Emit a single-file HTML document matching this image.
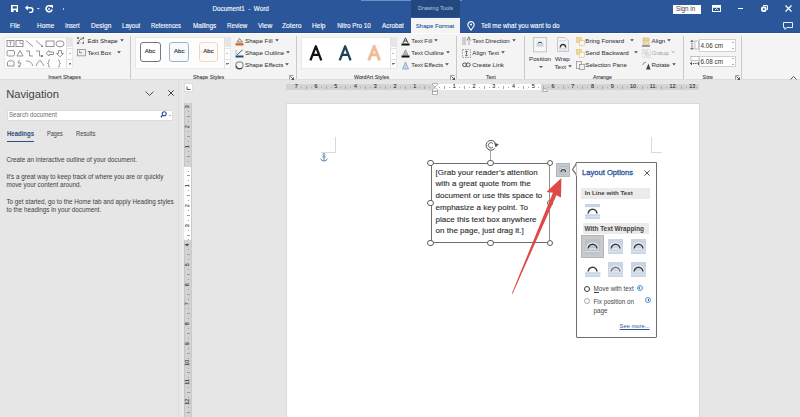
<!DOCTYPE html>
<html><head><meta charset="utf-8">
<style>
*{margin:0;padding:0;box-sizing:border-box}
html,body{width:800px;height:417px;overflow:hidden;background:#e6e6e6;font-family:"Liberation Sans",sans-serif}
.a{position:absolute}
.t{position:absolute;white-space:pre;line-height:1}
#title{left:0;top:0;width:800px;height:33px;background:#2b579a}
.tab{position:absolute;top:23px;font-size:6.3px;color:#fff;-webkit-text-stroke:0.1px #fff;white-space:pre;line-height:1}
#ribbon{left:0;top:33px;width:800px;height:47.4px;background:#f4f4f4;border-bottom:1px solid #dcdcdc}
.rt{position:absolute;font-size:6.2px;color:#383838;-webkit-text-stroke:0.04px #383838;white-space:pre;line-height:1;margin-top:0.7px}
.gl{position:absolute;font-size:5.3px;color:#3c3c3c;-webkit-text-stroke:0.1px #3c3c3c;white-space:pre;line-height:1;top:74.9px}
.sep{position:absolute;top:36px;width:1px;height:43px;background:#c9c9c9}
.arr{display:inline-block;width:0;height:0;border-left:1.8px solid transparent;border-right:1.8px solid transparent;border-top:2.3px solid #4a4a4a;vertical-align:0.5px;margin-left:2px;-webkit-text-stroke:0}
.nt{position:absolute;left:6.4px;font-size:6.3px;color:#404040;margin-top:0.8px;white-space:pre;line-height:1}
.rn{position:absolute;font-size:5.4px;color:#303030;-webkit-text-stroke:0.1px #303030;text-align:center;line-height:1;white-space:pre}
.tb{position:absolute;left:435.6px;font-size:8px;color:#2e2e2e;-webkit-text-stroke:0.12px #2e2e2e;margin-top:2.2px;white-space:pre;line-height:1}
.hd{position:absolute;width:6.4px;height:6.4px;margin:-3.2px 0 0 -3.2px;border-radius:50%;border:1.1px solid #5e5e5e;background:#fff}
.ar{display:inline-block;margin-left:2px;vertical-align:1px}
</style></head><body>

<!-- TITLE BAR -->
<div id="title" class="a"></div>
<div class="a" style="left:361px;top:0;width:101px;height:1px;background:#6d8fc4"></div>
<div class="a" style="left:410.5px;top:0;width:49.5px;height:17px;background:#22487f"></div>
<div class="t" style="left:418px;top:5.6px;font-size:5.6px;color:#b9c9e2">Drawing Tools</div>
<div class="t" style="left:212.5px;top:6px;font-size:6.3px;color:#fff;-webkit-text-stroke:0.1px #fff">Document1  -  Word</div>
<!-- qat -->
<svg class="a" style="left:10.8px;top:4.8px" width="7.4" height="7.6" viewBox="0 0 7.4 7.6"><rect width="7.4" height="7.6" fill="#fff"/><rect x="1.6" y="1.2" width="4.2" height="2.4" fill="#2b579a"/><rect x="2.6" y="5.2" width="2.4" height="2.4" fill="#2b579a"/></svg>
<svg class="a" style="left:24.8px;top:4.6px" width="16" height="8" viewBox="0 0 16 8"><path d="M2 2.8 H5.6 A2.3 2.3 0 0 1 5.6 7.4 H4.2" fill="none" stroke="#fff" stroke-width="1.4"/><path d="M0 2.8 L2.8 0.2 L2.8 5.4 Z" fill="#fff"/><path d="M11.8 3 L14.8 3 L13.3 4.6Z" fill="#dfe6f1"/></svg>
<svg class="a" style="left:45.2px;top:4.8px" width="8" height="8" viewBox="0 0 8 8"><path d="M6.2 1.6 A3 3 0 1 0 7 4.5" fill="none" stroke="#fff" stroke-width="1.6"/><path d="M4.2 0 L8 0 L8 3.6Z" fill="#fff"/><circle cx="4" cy="4" r="0.9" fill="#fff"/></svg>
<div class="a" style="left:62.6px;top:8.4px;width:1.6px;height:1.8px;background:#b9c8e0"></div>
<!-- right controls -->
<div class="a" style="left:672.5px;top:4.5px;width:28.5px;height:9.5px;background:#fff"></div>
<div class="t" style="left:676px;top:6px;font-size:6.3px;color:#444">Sign in</div>
<svg class="a" style="left:712px;top:5px" width="9" height="7" viewBox="0 0 9 7"><rect x="0.5" y="0.5" width="8" height="6" fill="none" stroke="#fff"/><rect x="0.5" y="0.5" width="8" height="2.3" fill="#fff"/><path d="M3 5 L4.5 3.5 L6 5" fill="none" stroke="#fff" stroke-width="0.8"/></svg>
<div class="a" style="left:738px;top:7.5px;width:5px;height:1px;background:#fff"></div>
<svg class="a" style="left:760.5px;top:4.5px" width="7" height="7" viewBox="0 0 7 7"><path d="M2 0.6 H6.4 V5" fill="none" stroke="#fff" stroke-width="1"/><rect x="0.6" y="2" width="4.4" height="4.4" rx="1" fill="#fff" stroke="#fff" stroke-width="1"/><rect x="1.9" y="3.3" width="1.8" height="1.8" fill="#2b579a"/></svg>
<svg class="a" style="left:784.5px;top:5px" width="7" height="7" viewBox="0 0 7 7"><path d="M0.5 0.5 L6.5 6.5 M6.5 0.5 L0.5 6.5" stroke="#fff" stroke-width="1.2"/></svg>
<svg class="a" style="left:783px;top:21.5px" width="10" height="8" viewBox="0 0 10 8"><path d="M0.5 0.5 H9.5 V5.5 H4 L1.8 7.5 V5.5 H0.5 Z" fill="none" stroke="#fff" stroke-width="0.9"/></svg>

<!-- TABS -->
<div class="tab" style="left:10.2px;transform:scaleX(0.986);transform-origin:0 0">File</div>
<div class="tab" style="left:36.7px;transform:scaleX(1.030);transform-origin:0 0">Home</div>
<div class="tab" style="left:64.8px;transform:scaleX(0.933);transform-origin:0 0">Insert</div>
<div class="tab" style="left:90.7px;transform:scaleX(1.035);transform-origin:0 0">Design</div>
<div class="tab" style="left:121.7px;transform:scaleX(0.967);transform-origin:0 0">Layout</div>
<div class="tab" style="left:151.2px;transform:scaleX(0.932);transform-origin:0 0">References</div>
<div class="tab" style="left:192.5px;transform:scaleX(1.005);transform-origin:0 0">Mailings</div>
<div class="tab" style="left:226.7px;transform:scaleX(0.983);transform-origin:0 0">Review</div>
<div class="tab" style="left:257.5px;transform:scaleX(1.049);transform-origin:0 0">View</div>
<div class="tab" style="left:282.2px;transform:scaleX(1.071);transform-origin:0 0">Zotero</div>
<div class="tab" style="left:312.2px;transform:scaleX(1.041);transform-origin:0 0">Help</div>
<div class="tab" style="left:337.2px;transform:scaleX(1.000);transform-origin:0 0">Nitro Pro 10</div>
<div class="tab" style="left:381.7px;transform:scaleX(1.005);transform-origin:0 0">Acrobat</div>
<div class="a" style="left:410.8px;top:18px;width:49.2px;height:16px;background:#f4f4f4"></div>
<div class="tab" style="left:415.7px;font-size:6.1px;color:#2b579a;-webkit-text-stroke:0.1px #2b579a">Shape Format</div>
<svg class="a" style="left:467.4px;top:21px" width="8" height="10" viewBox="0 0 8 10"><path d="M4 9.2 L1.3 5.2 A3.1 3.1 0 1 1 6.7 5.2 Z" fill="none" stroke="#fff" stroke-width="1.1" stroke-linejoin="round"/><circle cx="4" cy="3.6" r="1" fill="#fff"/></svg>
<div class="tab" style="left:481px;transform:scaleX(1.012);transform-origin:0 0">Tell me what you want to do</div>

<!-- RIBBON -->
<div id="ribbon" class="a"></div>
<div class="a" style="left:0;top:33px;width:800px;height:1.2px;background:#fdfdfd"></div>
<div class="a" style="left:0;top:32.2px;width:410.8px;height:0.8px;background:#24508f"></div><div class="a" style="left:460px;top:32.2px;width:340px;height:0.8px;background:#24508f"></div>

<!-- shapes gallery -->
<div class="a" style="left:4.3px;top:37.2px;width:69px;height:31.6px;background:#fdfdfd;border:1px solid #e9e9e9"></div>
<div class="a" style="left:66.2px;top:37.2px;width:7.2px;height:31.6px;border-left:1px solid #e2e2e2"></div>
<div class="a" style="left:66.7px;top:37.7px;width:6.2px;height:9.8px;background:#e6e6e6"></div>
<div class="a" style="left:67px;top:47.5px;width:6px;height:0;border-top:1px solid #e2e2e2"></div>
<div class="a" style="left:67px;top:58.5px;width:6px;height:0;border-top:1px solid #e2e2e2"></div>
<div class="a" style="left:68.8px;top:52.5px;width:0;height:0;border-left:1.2px solid transparent;border-right:1.2px solid transparent;border-top:1.2px solid #777"></div>
<div class="a" style="left:68.8px;top:62.6px;width:2.4px;height:0.8px;background:#777"></div>
<div class="a" style="left:68.8px;top:63.8px;width:0;height:0;border-left:1.2px solid transparent;border-right:1.2px solid transparent;border-top:1.2px solid #777"></div>
<svg class="a" style="left:5px;top:38.6px" width="61" height="31" viewBox="0 0 61 31" fill="none" stroke="#8a8a8a" stroke-width="0.9">
 <rect x="2" y="1.5" width="7" height="6"/><path d="M4 3 h3 M5.5 3 v3.5" stroke-width="0.7"/>
 <rect x="11" y="1.5" width="7" height="6"/><path d="M15 1.5 v3 h3" stroke-width="0.7"/>
 <path d="M21 1.5 L28 7.5"/>
 <path d="M31 1.5 L37.5 7.5"/><path d="M38 8 l-2 -0.3 l1.5 -1.5z" fill="#555" stroke="none"/>
 <rect x="41" y="2" width="8" height="5.5"/>
 <ellipse cx="55" cy="4.8" rx="4" ry="3"/>
 <rect x="2" y="11.5" width="7.5" height="5.5" rx="1.5"/>
 <path d="M12 17 L15 11.5 L18 17 Z"/>
 <path d="M21 12 h3.5 v5 h3.5"/>
 <path d="M31 12 h3.5 v5 h3"/><path d="M38.5 17 l-2 -1.2 v2.4z" fill="#555" stroke="none"/>
 <path d="M41 14.2 L44 11.5 V13 H48.5 V15.5 H44 V17 Z"/>
 <path d="M53.5 11.5 H56.5 V14.5 H58.5 L55 17.8 L51.5 14.5 H53.5 Z"/>
 <path d="M2.5 27 V23 Q4 21 6 22 Q8 21 9 23 V27 Z"/>
 <path d="M14.5 21 L13 24 L16 24 L14 28 M14 28 l-1 -1.5 M14 28 l1.5 -1"/>
 <path d="M21 22 Q26 21.5 28 27"/>
 <path d="M31 27 Q34 20 36 22 Q37 24 39 27"/>
 <path d="M45 21 Q43.5 21 43.5 22.5 V23.5 Q43.5 24.5 42.5 24.5 Q43.5 24.5 43.5 25.5 V26.5 Q43.5 28 45 28"/>
 <path d="M53 21 Q54.5 21 54.5 22.5 V23.5 Q54.5 24.5 55.5 24.5 Q54.5 24.5 54.5 25.5 V26.5 Q54.5 28 53 28"/>
</svg>
<svg class="a" style="left:76.6px;top:37px" width="7.5" height="7" viewBox="0 0 7.5 7"><rect x="1" y="1" width="5.5" height="5" fill="none" stroke="#8a8a8a" stroke-width="0.6" stroke-dasharray="1 0.8"/><path d="M1.5 5.5 Q2 2 6 1.5" fill="none" stroke="#555" stroke-width="0.7"/><rect x="0" y="0" width="1.8" height="1.8" fill="#666"/><rect x="5.7" y="0" width="1.8" height="1.8" fill="#666"/><rect x="0" y="5.2" width="1.8" height="1.8" fill="#666"/><rect x="5.7" y="5.2" width="1.8" height="1.8" fill="#666"/></svg>
<div class="rt" style="left:87.5px;top:37.6px">Edit Shape<svg class="ar" width="4" height="3" viewBox="0 0 4 3"><path d="M0.2 0.3H3.8L2 2.5Z" fill="#4a4a4a"/></svg></div>
<svg class="a" style="left:76.5px;top:49.3px" width="9" height="7.3" viewBox="0 0 9 7.3"><rect x="0.5" y="0.5" width="8" height="6.3" fill="#f0f0f0" stroke="#9a9a9a" stroke-width="0.9"/><path d="M2.6 1.5 v2.3 h2.4" fill="none" stroke="#555" stroke-width="0.6"/></svg>
<div class="rt" style="left:87.5px;top:49.8px">Text Box  <svg class="ar" width="4" height="3" viewBox="0 0 4 3"><path d="M0.2 0.3H3.8L2 2.5Z" fill="#4a4a4a"/></svg></div>
<div class="gl" style="left:48.2px">Insert Shapes</div>
<div class="sep" style="left:130px"></div>

<!-- shape styles -->
<div class="a" style="left:135px;top:37.2px;width:96px;height:31.6px;background:#fdfdfd;border:1px solid #e9e9e9"></div>
<div class="a" style="left:224px;top:37.2px;width:7px;height:31.6px;border-left:1px solid #e2e2e2"></div>
<div class="a" style="left:224.5px;top:37.7px;width:6px;height:9.8px;background:#e6e6e6"></div>
<div class="a" style="left:225px;top:47.5px;width:6px;border-top:1px solid #e2e2e2"></div>
<div class="a" style="left:225px;top:58.5px;width:6px;border-top:1px solid #e2e2e2"></div>
<div class="a" style="left:226.3px;top:52.5px;width:0;height:0;border-left:1.2px solid transparent;border-right:1.2px solid transparent;border-top:1.2px solid #777"></div>
<div class="a" style="left:226.3px;top:62.6px;width:2.4px;height:0.8px;background:#777"></div>
<div class="a" style="left:226.3px;top:63.8px;width:0;height:0;border-left:1.2px solid transparent;border-right:1.2px solid transparent;border-top:1.2px solid #777"></div>
<div class="a" style="left:140px;top:42px;width:20.6px;height:19.6px;border:1.7px solid #787878;border-radius:3px;background:#fff"></div>
<div class="t" style="left:144.8px;top:48.3px;font-size:6.1px;color:#333;-webkit-text-stroke:0.15px #333">Abc</div>
<div class="a" style="left:169.4px;top:42px;width:20.1px;height:19.6px;border:1.7px solid #a3b3c3;border-radius:3px;background:#f8fbfd"></div>
<div class="t" style="left:174px;top:48.3px;font-size:6.1px;color:#333;-webkit-text-stroke:0.15px #333">Abc</div>
<div class="a" style="left:198.8px;top:42px;width:19.5px;height:19.6px;border:1.7px solid #f0d6c4;border-radius:3px;background:#fffaf7"></div>
<div class="t" style="left:203.2px;top:48.3px;font-size:6.1px;color:#333;-webkit-text-stroke:0.15px #333">Abc</div>
<svg class="a" style="left:234.5px;top:36.5px" width="9" height="9" viewBox="0 0 9 9"><path d="M2 5 L4.5 1.5 L7.5 5 Z" fill="none" stroke="#666" stroke-width="0.8"/><rect x="0.5" y="6.2" width="8" height="2.3" fill="#d9622b"/></svg>
<div class="rt" style="left:245px;top:37.6px">Shape Fill<svg class="ar" width="4" height="3" viewBox="0 0 4 3"><path d="M0.2 0.3H3.8L2 2.5Z" fill="#4a4a4a"/></svg></div>
<svg class="a" style="left:234.5px;top:48.5px" width="9" height="9" viewBox="0 0 9 9"><path d="M2 6 L7.5 0.8" stroke="#555" stroke-width="1"/><path d="M1 1 V6" stroke="#888" stroke-width="0.6"/><rect x="0.5" y="6.5" width="8" height="2" fill="#1f4e79"/></svg>
<div class="rt" style="left:245px;top:49.8px">Shape Outline<svg class="ar" width="4" height="3" viewBox="0 0 4 3"><path d="M0.2 0.3H3.8L2 2.5Z" fill="#4a4a4a"/></svg></div>
<svg class="a" style="left:234.5px;top:60.5px" width="9" height="9" viewBox="0 0 9 9"><rect x="1" y="1" width="7" height="6.5" rx="2.2" fill="#f4f4f4" stroke="#666" stroke-width="0.9"/><path d="M1.2 5 Q1.5 7.8 4.5 7.8 L7 7.3" fill="none" stroke="#444" stroke-width="1.3"/></svg>
<div class="rt" style="left:245px;top:61.8px">Shape Effects<svg class="ar" width="4" height="3" viewBox="0 0 4 3"><path d="M0.2 0.3H3.8L2 2.5Z" fill="#4a4a4a"/></svg></div>
<div class="gl" style="left:193px">Shape Styles</div>
<svg class="a" style="left:289px;top:75px" width="5" height="5" viewBox="0 0 5 5"><path d="M0.5 4.5 V0.5 H4.5" fill="none" stroke="#777" stroke-width="0.7"/><path d="M1.5 1.5 L4.5 4.5 M4.5 2.5 V4.5 H2.5" fill="none" stroke="#333" stroke-width="0.8"/></svg>
<div class="sep" style="left:295.5px"></div>

<!-- wordart -->
<div class="a" style="left:300.5px;top:37.2px;width:96.5px;height:31.6px;background:#fff;border:1px solid #e9e9e9"></div>
<div class="a" style="left:390px;top:37.2px;width:7px;height:31.6px;border-left:1px solid #e2e2e2"></div>
<div class="a" style="left:390.5px;top:37.7px;width:6px;height:9.8px;background:#e6e6e6"></div>
<div class="a" style="left:391px;top:47.5px;width:6px;border-top:1px solid #e2e2e2"></div>
<div class="a" style="left:391px;top:58.5px;width:6px;border-top:1px solid #e2e2e2"></div>
<div class="a" style="left:392.3px;top:52.5px;width:0;height:0;border-left:1.2px solid transparent;border-right:1.2px solid transparent;border-top:1.2px solid #777"></div>
<div class="a" style="left:392.3px;top:62.6px;width:2.4px;height:0.8px;background:#777"></div>
<div class="a" style="left:392.3px;top:63.8px;width:0;height:0;border-left:1.2px solid transparent;border-right:1.2px solid transparent;border-top:1.2px solid #777"></div>
<svg class="a" style="left:305px;top:43px" width="90" height="20" viewBox="0 0 90 20">
 <path d="M5.40 17.4 L10.85 3.3 L16.30 17.4 M8.00 11.8 H13.70" fill="none" stroke="#111" stroke-width="2.3" stroke-linejoin="round"/>
 <path d="M34.70 17.4 L40.15 3.3 L45.60 17.4 M37.30 11.8 H43.00" fill="none" stroke="#1e4258" stroke-width="2.3" stroke-linejoin="round"/>
 <path d="M63.70 17.4 L69.15 3.3 L74.60 17.4 M66.30 11.8 H72.00" fill="none" stroke="#f7d9c6" stroke-width="3.6" stroke-linejoin="round"/>
 <path d="M63.70 17.4 L69.15 3.3 L74.60 17.4 M66.30 11.8 H72.00" fill="none" stroke="#eebb9c" stroke-width="2.2" stroke-linejoin="round"/>
</svg>
<div class="gl" style="left:354px">WordArt Styles</div>

<svg class="a" style="left:400.5px;top:36.5px" width="9" height="9" viewBox="0 0 9 9"><path d="M2 6 L4.5 0.8 L7 6 M3 4 H6" fill="none" stroke="#333" stroke-width="0.9"/><rect x="0.5" y="6.5" width="8" height="2" fill="#111"/></svg>
<div class="rt" style="left:411.3px;top:37.6px">Text Fill<svg class="ar" width="4" height="3" viewBox="0 0 4 3"><path d="M0.2 0.3H3.8L2 2.5Z" fill="#4a4a4a"/></svg></div>
<svg class="a" style="left:400.5px;top:48.5px" width="9" height="9" viewBox="0 0 9 9"><path d="M2 6 L4.5 0.8 L7 6 Z" fill="#bbb" stroke="#888" stroke-width="0.7"/><rect x="0.5" y="6.5" width="8" height="2" fill="#111"/></svg>
<div class="rt" style="left:411.3px;top:49.8px">Text Outline<svg class="ar" width="4" height="3" viewBox="0 0 4 3"><path d="M0.2 0.3H3.8L2 2.5Z" fill="#4a4a4a"/></svg></div>
<svg class="a" style="left:400.5px;top:60.5px" width="9" height="9" viewBox="0 0 9 9"><path d="M1.5 8 L4.5 1 L7.5 8 Z" fill="#c5d3e3" stroke="#8aa2bd" stroke-width="0.8"/></svg>
<div class="rt" style="left:411.3px;top:61.8px">Text Effects<svg class="ar" width="4" height="3" viewBox="0 0 4 3"><path d="M0.2 0.3H3.8L2 2.5Z" fill="#4a4a4a"/></svg></div>
<svg class="a" style="left:450px;top:75px" width="5" height="5" viewBox="0 0 5 5"><path d="M0.5 4.5 V0.5 H4.5" fill="none" stroke="#777" stroke-width="0.7"/><path d="M1.5 1.5 L4.5 4.5 M4.5 2.5 V4.5 H2.5" fill="none" stroke="#333" stroke-width="0.8"/></svg>
<div class="sep" style="left:455.5px"></div>

<!-- text group -->
<svg class="a" style="left:461.5px;top:36px" width="9" height="10" viewBox="0 0 9 10" fill="none" stroke="#888" stroke-width="0.7"><path d="M1 1 V9 M3 1 V9 M7 3 V9"/><path d="M5 4.5 L6.8 0.8 L8.6 4.5" stroke="#555"/></svg>
<div class="rt" style="left:472.3px;top:37.6px">Text Direction<svg class="ar" width="4" height="3" viewBox="0 0 4 3"><path d="M0.2 0.3H3.8L2 2.5Z" fill="#4a4a4a"/></svg></div>
<svg class="a" style="left:461.5px;top:48.5px" width="9" height="9" viewBox="0 0 9 9" fill="none" stroke="#777" stroke-width="0.7"><rect x="0.5" y="0.5" width="8" height="8" stroke-dasharray="1.5 1"/><path d="M4.5 2 V7 M3.2 3.2 L4.5 1.8 L5.8 3.2 M3.2 5.8 L4.5 7.2 L5.8 5.8" stroke="#444"/></svg>
<div class="rt" style="left:472.3px;top:49.8px">Align Text<svg class="ar" width="4" height="3" viewBox="0 0 4 3"><path d="M0.2 0.3H3.8L2 2.5Z" fill="#4a4a4a"/></svg></div>
<svg class="a" style="left:461.5px;top:62px" width="9" height="6" viewBox="0 0 9 6" fill="none" stroke="#555" stroke-width="1"><rect x="0.6" y="1" width="4.2" height="3.6" rx="1.8"/><rect x="4" y="1" width="4.2" height="3.6" rx="1.8"/></svg>
<div class="rt" style="left:472.3px;top:61.8px">Create Link</div>
<div class="gl" style="left:486px">Text</div>
<div class="sep" style="left:524px"></div>

<!-- arrange -->
<svg class="a" style="left:533px;top:37.4px" width="14" height="15.4" viewBox="0 0 14 15.4"><rect x="0.6" y="0.6" width="12.8" height="14.2" fill="#f7f7f7" stroke="#c4c4c4" stroke-width="1"/><rect x="3" y="3" width="8" height="7.5" fill="#eef1f4"/><path d="M4.8 6.2 Q7 4.2 9.2 6.2" fill="none" stroke="#3a3a3a" stroke-width="1"/><rect x="3.5" y="7" width="7" height="2.5" fill="#c9d6e3"/></svg>
<div class="rt" style="left:529px;top:55.5px">Position</div>
<div class="a" style="left:538.5px;top:66px;width:0;height:0;border-left:2px solid transparent;border-right:2px solid transparent;border-top:2px solid #555"></div>
<svg class="a" style="left:556.9px;top:37px" width="12" height="15.2" viewBox="0 0 12 15.2"><path d="M0.6 0.6 H8.2 L11.4 3.8 V14.6 H0.6 Z" fill="#f4f6f8" stroke="#c4c4c4" stroke-width="1"/><rect x="2" y="3.2" width="7.5" height="1" fill="#cdd8e3"/><rect x="2" y="10.8" width="8" height="1" fill="#cdd8e3"/><rect x="2" y="12.6" width="8" height="1" fill="#cdd8e3"/><path d="M3.3 10.4 A2.7 2.9 0 0 1 8.7 10.4" fill="none" stroke="#333" stroke-width="1.3"/></svg>
<div class="rt" style="left:555px;top:55.5px">Wrap</div>
<div class="rt" style="left:554.5px;top:63.5px">Text<svg class="ar" width="4" height="3" viewBox="0 0 4 3"><path d="M0.2 0.3H3.8L2 2.5Z" fill="#4a4a4a"/></svg></div>
<svg class="a" style="left:575.5px;top:36.5px" width="9" height="9" viewBox="0 0 9 9"><rect x="0.5" y="0.5" width="5" height="5" fill="#efd991" stroke="#d9bd6a" stroke-width="0.5"/><rect x="3.5" y="3.5" width="5" height="5" fill="#fbf6e8" stroke="#cfc4a8" stroke-width="0.6"/></svg>
<div class="rt" style="left:585.3px;top:37.6px">Bring Forward  <svg class="ar" width="4" height="3" viewBox="0 0 4 3"><path d="M0.2 0.3H3.8L2 2.5Z" fill="#4a4a4a"/></svg></div>
<svg class="a" style="left:575.5px;top:48.5px" width="9" height="9" viewBox="0 0 9 9"><rect x="0.5" y="0.5" width="5" height="5" fill="#efd991" stroke="#d9bd6a" stroke-width="0.5"/><rect x="3.5" y="3.5" width="5" height="5" fill="#fbf6e8" stroke="#cfc4a8" stroke-width="0.6"/></svg>
<div class="rt" style="left:585.3px;top:49.8px">Send Backward  <svg class="ar" width="4" height="3" viewBox="0 0 4 3"><path d="M0.2 0.3H3.8L2 2.5Z" fill="#4a4a4a"/></svg></div>
<svg class="a" style="left:575.5px;top:60.5px" width="9" height="9" viewBox="0 0 9 9" fill="none" stroke="#888" stroke-width="0.7"><rect x="0.5" y="0.5" width="5" height="7"/><rect x="3.5" y="3.5" width="5" height="5" fill="#f0f0f0"/></svg>
<div class="rt" style="left:585.3px;top:61.8px">Selection Pane</div>
<svg class="a" style="left:641.5px;top:36.5px" width="8" height="10" viewBox="0 0 8 10"><rect x="1" y="1" width="6" height="3" fill="#e6d3a0" stroke="#c9ae5a" stroke-width="0.5"/><rect x="1" y="5" width="6" height="2.5" fill="#f0e4c4" stroke="#c9ae5a" stroke-width="0.5"/><path d="M0 9 H8" stroke="#333" stroke-width="0.9"/></svg>
<div class="rt" style="left:651.5px;top:37.6px">Align<svg class="ar" width="4" height="3" viewBox="0 0 4 3"><path d="M0.2 0.3H3.8L2 2.5Z" fill="#4a4a4a"/></svg></div>
<svg class="a" style="left:641.5px;top:48.5px" width="9" height="9" viewBox="0 0 9 9" fill="none" stroke="#c8c8c8" stroke-width="0.7"><rect x="0.5" y="0.5" width="8" height="8" stroke-dasharray="1.2 1"/><rect x="2" y="2" width="3" height="3"/><rect x="4" y="4" width="3" height="3"/></svg>
<div class="rt" style="left:651.5px;top:49.8px;color:#b8b8b8">Group<svg class="ar" width="4" height="3" viewBox="0 0 4 3"><path d="M0.2 0.3H3.8L2 2.5Z" fill="#c4c4c4"/></svg></div>
<svg class="a" style="left:641.5px;top:60.5px" width="9" height="9" viewBox="0 0 9 9"><path d="M4 8.5 L6.5 2.5 L8.5 8.5 Z" fill="#444"/><path d="M0.8 4 Q1.5 1 4 1.2" fill="none" stroke="#666" stroke-width="0.7"/></svg>
<div class="rt" style="left:651.5px;top:61.8px">Rotate<svg class="ar" width="4" height="3" viewBox="0 0 4 3"><path d="M0.2 0.3H3.8L2 2.5Z" fill="#4a4a4a"/></svg></div>
<div class="gl" style="left:593px">Arrange</div>
<div class="sep" style="left:683.2px"></div>

<!-- size -->
<svg class="a" style="left:689.5px;top:39.5px" width="9" height="10" viewBox="0 0 9 10"><path d="M2 0.5 V9.5" stroke="#333" stroke-width="0.8" stroke-dasharray="1.5 0.8"/><path d="M0.5 2 L2 0.5 L3.5 2 M0.5 8 L2 9.5 L3.5 8" fill="none" stroke="#333" stroke-width="0.8"/><rect x="5" y="1" width="3.5" height="8" fill="#fff" stroke="#999" stroke-width="0.6"/></svg>
<div class="a" style="left:699px;top:39.4px;width:37px;height:12.2px;background:#fff;border:1px solid #cfcfcf"></div>
<div class="rt" style="left:700.5px;top:42.3px;font-size:6.3px">4.06 cm</div>
<div class="a" style="left:731.5px;top:41.5px;border-left:1.3px solid transparent;border-right:1.3px solid transparent;border-bottom:1.3px solid #666"></div>
<div class="a" style="left:731.5px;top:47.5px;border-left:1.3px solid transparent;border-right:1.3px solid transparent;border-top:1.3px solid #666"></div>
<svg class="a" style="left:689.5px;top:56px" width="10" height="10" viewBox="0 0 10 10"><rect x="1" y="0.5" width="8" height="4" fill="#fff" stroke="#999" stroke-width="0.6"/><path d="M0.5 7.5 H9.5" stroke="#333" stroke-width="0.8" stroke-dasharray="1.5 0.8"/><path d="M2 6 L0.5 7.5 L2 9 M8 6 L9.5 7.5 L8 9" fill="none" stroke="#333" stroke-width="0.8"/></svg>
<div class="a" style="left:699px;top:55.6px;width:37px;height:11.8px;background:#fff;border:1px solid #cfcfcf"></div>
<div class="rt" style="left:700.5px;top:58.3px;font-size:6.3px">6.08 cm</div>
<div class="a" style="left:731.5px;top:57.5px;border-left:1.3px solid transparent;border-right:1.3px solid transparent;border-bottom:1.3px solid #666"></div>
<div class="a" style="left:731.5px;top:63.5px;border-left:1.3px solid transparent;border-right:1.3px solid transparent;border-top:1.3px solid #666"></div>
<div class="gl" style="left:702.6px">Size</div>
<svg class="a" style="left:734.5px;top:75px" width="5" height="5" viewBox="0 0 5 5"><path d="M0.5 4.5 V0.5 H4.5" fill="none" stroke="#777" stroke-width="0.7"/><path d="M1.5 1.5 L4.5 4.5 M4.5 2.5 V4.5 H2.5" fill="none" stroke="#333" stroke-width="0.8"/></svg>
<div class="sep" style="left:741px"></div>
<svg class="a" style="left:789.5px;top:75.5px" width="7" height="4" viewBox="0 0 7 4"><path d="M0.5 3.5 L3.5 0.5 L6.5 3.5" fill="none" stroke="#444" stroke-width="0.9"/></svg>

<!-- NAV PANE -->
<div class="t" style="left:6.2px;top:88.8px;font-size:11.2px;color:#444">Navigation</div>
<svg class="a" style="left:145px;top:91px" width="9" height="5" viewBox="0 0 9 5"><path d="M0.5 0.5 L4.5 4.5 L8.5 0.5" fill="none" stroke="#555" stroke-width="1"/></svg>
<svg class="a" style="left:167.8px;top:90px" width="6" height="6" viewBox="0 0 6 6"><path d="M0.3 0.3 L5.7 5.7 M5.7 0.3 L0.3 5.7" stroke="#444" stroke-width="1"/></svg>
<div class="a" style="left:6.7px;top:109.5px;width:166.7px;height:11.5px;background:#fff;border:1px solid #dcdcdc"></div>
<div class="t" style="left:9.2px;top:111.5px;font-size:6.4px;color:#6e6e6e;transform:scaleX(0.955);transform-origin:0 0">Search document</div>
<svg class="a" style="left:160px;top:111px" width="7" height="7" viewBox="0 0 7 7"><circle cx="4.2" cy="2.8" r="2" fill="none" stroke="#2b579a" stroke-width="1.1"/><path d="M3 4 L0.8 6.2" stroke="#2b579a" stroke-width="1.3"/></svg>
<div class="a" style="left:169px;top:114.5px;width:0;height:0;border-left:1.5px solid transparent;border-right:1.5px solid transparent;border-top:1.5px solid #666"></div>
<div class="t" style="left:6.7px;top:131px;font-size:6.4px;font-weight:bold;color:#2b4f80;transform:scaleX(0.94);transform-origin:0 0">Headings</div>
<div class="a" style="left:6.5px;top:140.5px;width:27.5px;height:1.6px;background:#2b4f80"></div>
<div class="t" style="left:46.6px;top:130.9px;font-size:6.4px;color:#444;transform:scaleX(0.875);transform-origin:0 0">Pages</div>
<div class="t" style="left:76.3px;top:130.9px;font-size:6.4px;color:#444;transform:scaleX(0.905);transform-origin:0 0">Results</div>
<div class="nt" style="top:156px">Create an interactive outline of your document.</div>
<div class="nt" style="top:173px">It's a great way to keep track of where you are or quickly</div>
<div class="nt" style="top:181px">move your content around.</div>
<div class="nt" style="top:198px">To get started, go to the Home tab and apply Heading styles</div>
<div class="nt" style="top:206px">to the headings in your document.</div>
<div class="a" style="left:177.6px;top:81px;width:1px;height:336px;background:#dcdcdc"></div><div class="a" style="left:182.2px;top:81px;width:1.3px;height:336px;background:#efefef"></div>

<!-- DOC AREA -->
<!-- rulers -->
<div class="a" style="left:184px;top:83px;width:8.7px;height:8.5px;background:#fff;border:1px solid #dedede"></div>
<svg class="a" style="left:186px;top:85.5px" width="5" height="5" viewBox="0 0 5 5"><path d="M1 0.5 V3.5 H4.5" fill="none" stroke="#444" stroke-width="0.9"/></svg>
<div class="a" style="left:286px;top:83.5px;width:412.5px;height:6.6px;background:#d3d3d3"></div>
<div class="a" style="left:434.6px;top:83.5px;width:106.6px;height:6.6px;background:#fff"></div>
<div class="rn" style="left:294.35px;top:84.2px;width:4px">7</div>
<div class="a" style="left:300.89px;top:86.5px;width:0.8px;height:1px;background:#a8a8a8"></div>
<div class="a" style="left:305.83px;top:85.5px;width:0.8px;height:3px;background:#a8a8a8"></div>
<div class="a" style="left:310.76px;top:86.5px;width:0.8px;height:1px;background:#a8a8a8"></div>
<div class="rn" style="left:314.10px;top:84.2px;width:4px">6</div>
<div class="a" style="left:320.64px;top:86.5px;width:0.8px;height:1px;background:#a8a8a8"></div>
<div class="a" style="left:325.58px;top:85.5px;width:0.8px;height:3px;background:#a8a8a8"></div>
<div class="a" style="left:330.51px;top:86.5px;width:0.8px;height:1px;background:#a8a8a8"></div>
<div class="rn" style="left:333.85px;top:84.2px;width:4px">5</div>
<div class="a" style="left:340.39px;top:86.5px;width:0.8px;height:1px;background:#a8a8a8"></div>
<div class="a" style="left:345.33px;top:85.5px;width:0.8px;height:3px;background:#a8a8a8"></div>
<div class="a" style="left:350.26px;top:86.5px;width:0.8px;height:1px;background:#a8a8a8"></div>
<div class="rn" style="left:353.60px;top:84.2px;width:4px">4</div>
<div class="a" style="left:360.14px;top:86.5px;width:0.8px;height:1px;background:#a8a8a8"></div>
<div class="a" style="left:365.08px;top:85.5px;width:0.8px;height:3px;background:#a8a8a8"></div>
<div class="a" style="left:370.01px;top:86.5px;width:0.8px;height:1px;background:#a8a8a8"></div>
<div class="rn" style="left:373.35px;top:84.2px;width:4px">3</div>
<div class="a" style="left:379.89px;top:86.5px;width:0.8px;height:1px;background:#a8a8a8"></div>
<div class="a" style="left:384.83px;top:85.5px;width:0.8px;height:3px;background:#a8a8a8"></div>
<div class="a" style="left:389.76px;top:86.5px;width:0.8px;height:1px;background:#a8a8a8"></div>
<div class="rn" style="left:393.10px;top:84.2px;width:4px">2</div>
<div class="a" style="left:399.64px;top:86.5px;width:0.8px;height:1px;background:#a8a8a8"></div>
<div class="a" style="left:404.58px;top:85.5px;width:0.8px;height:3px;background:#a8a8a8"></div>
<div class="a" style="left:409.51px;top:86.5px;width:0.8px;height:1px;background:#a8a8a8"></div>
<div class="rn" style="left:412.85px;top:84.2px;width:4px">1</div>
<div class="a" style="left:419.39px;top:86.5px;width:0.8px;height:1px;background:#a8a8a8"></div>
<div class="a" style="left:424.33px;top:85.5px;width:0.8px;height:3px;background:#a8a8a8"></div>
<div class="a" style="left:429.26px;top:86.5px;width:0.8px;height:1px;background:#a8a8a8"></div>
<div class="a" style="left:439.14px;top:86.5px;width:0.8px;height:1px;background:#a8a8a8"></div>
<div class="a" style="left:444.08px;top:85.5px;width:0.8px;height:3px;background:#a8a8a8"></div>
<div class="a" style="left:449.01px;top:86.5px;width:0.8px;height:1px;background:#a8a8a8"></div>
<div class="rn" style="left:452.35px;top:84.2px;width:4px">1</div>
<div class="a" style="left:458.89px;top:86.5px;width:0.8px;height:1px;background:#a8a8a8"></div>
<div class="a" style="left:463.83px;top:85.5px;width:0.8px;height:3px;background:#a8a8a8"></div>
<div class="a" style="left:468.76px;top:86.5px;width:0.8px;height:1px;background:#a8a8a8"></div>
<div class="rn" style="left:472.10px;top:84.2px;width:4px">2</div>
<div class="a" style="left:478.64px;top:86.5px;width:0.8px;height:1px;background:#a8a8a8"></div>
<div class="a" style="left:483.58px;top:85.5px;width:0.8px;height:3px;background:#a8a8a8"></div>
<div class="a" style="left:488.51px;top:86.5px;width:0.8px;height:1px;background:#a8a8a8"></div>
<div class="rn" style="left:491.85px;top:84.2px;width:4px">3</div>
<div class="a" style="left:498.39px;top:86.5px;width:0.8px;height:1px;background:#a8a8a8"></div>
<div class="a" style="left:503.33px;top:85.5px;width:0.8px;height:3px;background:#a8a8a8"></div>
<div class="a" style="left:508.26px;top:86.5px;width:0.8px;height:1px;background:#a8a8a8"></div>
<div class="rn" style="left:511.60px;top:84.2px;width:4px">4</div>
<div class="a" style="left:518.14px;top:86.5px;width:0.8px;height:1px;background:#a8a8a8"></div>
<div class="a" style="left:523.08px;top:85.5px;width:0.8px;height:3px;background:#a8a8a8"></div>
<div class="a" style="left:528.01px;top:86.5px;width:0.8px;height:1px;background:#a8a8a8"></div>
<div class="rn" style="left:531.35px;top:84.2px;width:4px">5</div>
<div class="a" style="left:537.89px;top:86.5px;width:0.8px;height:1px;background:#a8a8a8"></div>
<div class="a" style="left:542.83px;top:85.5px;width:0.8px;height:3px;background:#a8a8a8"></div>
<div class="a" style="left:547.76px;top:86.5px;width:0.8px;height:1px;background:#a8a8a8"></div>
<div class="rn" style="left:551.10px;top:84.2px;width:4px">6</div>
<div class="a" style="left:557.64px;top:86.5px;width:0.8px;height:1px;background:#a8a8a8"></div>
<div class="a" style="left:562.58px;top:85.5px;width:0.8px;height:3px;background:#a8a8a8"></div>
<div class="a" style="left:567.51px;top:86.5px;width:0.8px;height:1px;background:#a8a8a8"></div>
<div class="rn" style="left:570.85px;top:84.2px;width:4px">7</div>
<div class="a" style="left:577.39px;top:86.5px;width:0.8px;height:1px;background:#a8a8a8"></div>
<div class="a" style="left:582.33px;top:85.5px;width:0.8px;height:3px;background:#a8a8a8"></div>
<div class="a" style="left:587.26px;top:86.5px;width:0.8px;height:1px;background:#a8a8a8"></div>
<div class="rn" style="left:590.60px;top:84.2px;width:4px">8</div>
<div class="a" style="left:597.14px;top:86.5px;width:0.8px;height:1px;background:#a8a8a8"></div>
<div class="a" style="left:602.08px;top:85.5px;width:0.8px;height:3px;background:#a8a8a8"></div>
<div class="a" style="left:607.01px;top:86.5px;width:0.8px;height:1px;background:#a8a8a8"></div>
<div class="rn" style="left:610.35px;top:84.2px;width:4px">9</div>
<div class="a" style="left:616.89px;top:86.5px;width:0.8px;height:1px;background:#a8a8a8"></div>
<div class="a" style="left:621.83px;top:85.5px;width:0.8px;height:3px;background:#a8a8a8"></div>
<div class="a" style="left:626.76px;top:86.5px;width:0.8px;height:1px;background:#a8a8a8"></div>
<div class="rn" style="left:630.10px;top:84.2px;width:4px">10</div>
<div class="a" style="left:636.64px;top:86.5px;width:0.8px;height:1px;background:#a8a8a8"></div>
<div class="a" style="left:641.58px;top:85.5px;width:0.8px;height:3px;background:#a8a8a8"></div>
<div class="a" style="left:646.51px;top:86.5px;width:0.8px;height:1px;background:#a8a8a8"></div>
<div class="rn" style="left:649.85px;top:84.2px;width:4px">11</div>
<div class="a" style="left:656.39px;top:86.5px;width:0.8px;height:1px;background:#a8a8a8"></div>
<div class="a" style="left:661.33px;top:85.5px;width:0.8px;height:3px;background:#a8a8a8"></div>
<div class="a" style="left:666.26px;top:86.5px;width:0.8px;height:1px;background:#a8a8a8"></div>
<div class="rn" style="left:669.60px;top:84.2px;width:4px">12</div>
<div class="a" style="left:676.14px;top:86.5px;width:0.8px;height:1px;background:#a8a8a8"></div>
<div class="a" style="left:681.08px;top:85.5px;width:0.8px;height:3px;background:#a8a8a8"></div>
<div class="a" style="left:686.01px;top:86.5px;width:0.8px;height:1px;background:#a8a8a8"></div>
<div class="rn" style="left:689.35px;top:84.2px;width:4px">13</div>
<div class="a" style="left:695.89px;top:86.5px;width:0.8px;height:1px;background:#a8a8a8"></div>
<svg class="a" style="left:432px;top:82.5px" width="6" height="12" viewBox="0 0 6 12"><path d="M0.5 0.5 H5.5 V1.5 L3 4 L0.5 1.5 Z" fill="#fff" stroke="#888" stroke-width="0.6"/><path d="M0.5 6.5 L3 4.5 L5.5 6.5 V8 H0.5 Z" fill="#fff" stroke="#888" stroke-width="0.6"/><rect x="0.5" y="8.5" width="5" height="3" fill="#fff" stroke="#888" stroke-width="0.6"/></svg>
<svg class="a" style="left:541.5px;top:87px" width="6" height="5" viewBox="0 0 6 5"><path d="M0.5 4.5 L3 1 L5.5 4.5 Z" fill="#fff" stroke="#888" stroke-width="0.6"/></svg>
<div class="a" style="left:183.5px;top:102.9px;width:8.3px;height:314.1px;background:#d3d3d3;border-left:0.8px solid #c4c4c4;border-right:0.6px solid #cacaca"></div>
<div class="a" style="left:184.3px;top:166.5px;width:6.9px;height:73px;background:#fff"></div>
<div class="rn" style="left:186.4px;top:104.40px;width:4px;transform:rotate(-90deg)">3</div>
<div class="a" style="left:188px;top:111.42px;width:1px;height:0.8px;background:#9c9c9c"></div>
<div class="a" style="left:187px;top:116.35px;width:3px;height:0.8px;background:#9c9c9c"></div>
<div class="a" style="left:188px;top:121.28px;width:1px;height:0.8px;background:#9c9c9c"></div>
<div class="rn" style="left:186.4px;top:124.10px;width:4px;transform:rotate(-90deg)">2</div>
<div class="a" style="left:188px;top:131.12px;width:1px;height:0.8px;background:#9c9c9c"></div>
<div class="a" style="left:187px;top:136.05px;width:3px;height:0.8px;background:#9c9c9c"></div>
<div class="a" style="left:188px;top:140.97px;width:1px;height:0.8px;background:#9c9c9c"></div>
<div class="rn" style="left:186.4px;top:143.80px;width:4px;transform:rotate(-90deg)">1</div>
<div class="a" style="left:188px;top:150.83px;width:1px;height:0.8px;background:#9c9c9c"></div>
<div class="a" style="left:187px;top:155.75px;width:3px;height:0.8px;background:#9c9c9c"></div>
<div class="a" style="left:188px;top:160.68px;width:1px;height:0.8px;background:#9c9c9c"></div>
<div class="a" style="left:188px;top:170.53px;width:1px;height:0.8px;background:#9c9c9c"></div>
<div class="a" style="left:187px;top:175.45px;width:3px;height:0.8px;background:#9c9c9c"></div>
<div class="a" style="left:188px;top:180.38px;width:1px;height:0.8px;background:#9c9c9c"></div>
<div class="rn" style="left:186.4px;top:183.20px;width:4px;transform:rotate(-90deg)">1</div>
<div class="a" style="left:188px;top:190.22px;width:1px;height:0.8px;background:#9c9c9c"></div>
<div class="a" style="left:187px;top:195.15px;width:3px;height:0.8px;background:#9c9c9c"></div>
<div class="a" style="left:188px;top:200.07px;width:1px;height:0.8px;background:#9c9c9c"></div>
<div class="rn" style="left:186.4px;top:202.90px;width:4px;transform:rotate(-90deg)">2</div>
<div class="a" style="left:188px;top:209.93px;width:1px;height:0.8px;background:#9c9c9c"></div>
<div class="a" style="left:187px;top:214.85px;width:3px;height:0.8px;background:#9c9c9c"></div>
<div class="a" style="left:188px;top:219.78px;width:1px;height:0.8px;background:#9c9c9c"></div>
<div class="rn" style="left:186.4px;top:222.60px;width:4px;transform:rotate(-90deg)">3</div>
<div class="a" style="left:188px;top:229.62px;width:1px;height:0.8px;background:#9c9c9c"></div>
<div class="a" style="left:187px;top:234.55px;width:3px;height:0.8px;background:#9c9c9c"></div>
<div class="a" style="left:188px;top:239.47px;width:1px;height:0.8px;background:#9c9c9c"></div>
<div class="rn" style="left:186.4px;top:242.30px;width:4px;transform:rotate(-90deg)">4</div>
<div class="a" style="left:188px;top:249.33px;width:1px;height:0.8px;background:#9c9c9c"></div>
<div class="a" style="left:187px;top:254.25px;width:3px;height:0.8px;background:#9c9c9c"></div>
<div class="a" style="left:188px;top:259.18px;width:1px;height:0.8px;background:#9c9c9c"></div>
<div class="rn" style="left:186.4px;top:262.00px;width:4px;transform:rotate(-90deg)">5</div>
<div class="a" style="left:188px;top:269.03px;width:1px;height:0.8px;background:#9c9c9c"></div>
<div class="a" style="left:187px;top:273.95px;width:3px;height:0.8px;background:#9c9c9c"></div>
<div class="a" style="left:188px;top:278.88px;width:1px;height:0.8px;background:#9c9c9c"></div>
<div class="rn" style="left:186.4px;top:281.70px;width:4px;transform:rotate(-90deg)">6</div>
<div class="a" style="left:188px;top:288.73px;width:1px;height:0.8px;background:#9c9c9c"></div>
<div class="a" style="left:187px;top:293.65px;width:3px;height:0.8px;background:#9c9c9c"></div>
<div class="a" style="left:188px;top:298.57px;width:1px;height:0.8px;background:#9c9c9c"></div>
<div class="rn" style="left:186.4px;top:301.40px;width:4px;transform:rotate(-90deg)">7</div>
<div class="a" style="left:188px;top:308.43px;width:1px;height:0.8px;background:#9c9c9c"></div>
<div class="a" style="left:187px;top:313.35px;width:3px;height:0.8px;background:#9c9c9c"></div>
<div class="a" style="left:188px;top:318.27px;width:1px;height:0.8px;background:#9c9c9c"></div>
<div class="rn" style="left:186.4px;top:321.10px;width:4px;transform:rotate(-90deg)">8</div>
<div class="a" style="left:188px;top:328.13px;width:1px;height:0.8px;background:#9c9c9c"></div>
<div class="a" style="left:187px;top:333.05px;width:3px;height:0.8px;background:#9c9c9c"></div>
<div class="a" style="left:188px;top:337.98px;width:1px;height:0.8px;background:#9c9c9c"></div>
<div class="rn" style="left:186.4px;top:340.80px;width:4px;transform:rotate(-90deg)">9</div>
<div class="a" style="left:188px;top:347.82px;width:1px;height:0.8px;background:#9c9c9c"></div>
<div class="a" style="left:187px;top:352.75px;width:3px;height:0.8px;background:#9c9c9c"></div>
<div class="a" style="left:188px;top:357.67px;width:1px;height:0.8px;background:#9c9c9c"></div>
<div class="rn" style="left:186.4px;top:360.50px;width:4px;transform:rotate(-90deg)">10</div>
<div class="a" style="left:188px;top:367.53px;width:1px;height:0.8px;background:#9c9c9c"></div>
<div class="a" style="left:187px;top:372.45px;width:3px;height:0.8px;background:#9c9c9c"></div>
<div class="a" style="left:188px;top:377.38px;width:1px;height:0.8px;background:#9c9c9c"></div>
<div class="rn" style="left:186.4px;top:380.20px;width:4px;transform:rotate(-90deg)">11</div>
<div class="a" style="left:188px;top:387.23px;width:1px;height:0.8px;background:#9c9c9c"></div>
<div class="a" style="left:187px;top:392.15px;width:3px;height:0.8px;background:#9c9c9c"></div>
<div class="a" style="left:188px;top:397.07px;width:1px;height:0.8px;background:#9c9c9c"></div>
<div class="rn" style="left:186.4px;top:399.90px;width:4px;transform:rotate(-90deg)">12</div>
<div class="a" style="left:188px;top:406.93px;width:1px;height:0.8px;background:#9c9c9c"></div>
<div class="a" style="left:187px;top:411.85px;width:3px;height:0.8px;background:#9c9c9c"></div>
<div class="a" style="left:286px;top:102.6px;width:414px;height:315px;background:#dadada"></div><div class="a" style="left:287px;top:103.6px;width:412px;height:314px;background:#fff"></div>

<!-- margin marks -->
<div class="a" style="left:335.2px;top:137px;width:0.8px;height:15.5px;background:#d9d9d9"></div>
<div class="a" style="left:320.6px;top:151.8px;width:15.4px;height:0.8px;background:#d9d9d9"></div>
<div class="a" style="left:651px;top:137px;width:0.8px;height:15.5px;background:#d9d9d9"></div>
<div class="a" style="left:651px;top:151.8px;width:10.5px;height:0.8px;background:#d9d9d9"></div>
<svg class="a" style="left:319.5px;top:153px" width="8" height="9" viewBox="0 0 8 9"><circle cx="4" cy="1.5" r="1.1" fill="none" stroke="#4a86b8" stroke-width="0.8"/><path d="M4 2.6 V8 M2.3 4 H5.7 M0.8 5.5 Q1 8 4 8 Q7 8 7.2 5.5" fill="none" stroke="#4a86b8" stroke-width="0.9"/></svg>
<!-- text box -->
<div class="a" style="left:490px;top:150.5px;width:0.9px;height:12.5px;background:#a5a5a5"></div>
<svg class="a" style="left:484.8px;top:139px" width="15" height="13" viewBox="0 0 15 13"><path d="M9.75 9.45 A4.9 4.9 0 1 1 10.44 4.23" fill="none" stroke="#555" stroke-width="1"/><path d="M8.07 8.04 A2.7 2.7 0 1 1 8.07 4.56" fill="none" stroke="#555" stroke-width="0.9"/><path d="M9.2 3.8 L13.8 5.2 L10.6 8.4 Z" fill="#555"/></svg>
<div class="a" style="left:430.5px;top:162.7px;width:119.8px;height:80.3px;border:1.3px solid #6e6e6e;border-right-color:#8e8e8e"></div>
<div class="tb" style="top:166.6px">[Grab your reader’s attention</div>
<div class="tb" style="top:178.3px">with a great quote from the</div>
<div class="tb" style="top:190px">document or use this space to</div>
<div class="tb" style="top:201.7px">emphasize a key point. To</div>
<div class="tb" style="top:213.4px">place this text box anywhere</div>
<div class="tb" style="top:225.1px">on the page, just drag it.]</div>
<div class="hd" style="left:430.6px;top:163px"></div>
<div class="hd" style="left:490.5px;top:163px"></div>
<div class="hd" style="left:550.2px;top:163px"></div>
<div class="hd" style="left:430.6px;top:203.1px"></div>
<div class="hd" style="left:550.2px;top:203.1px"></div>
<div class="hd" style="left:430.6px;top:243px"></div>
<div class="hd" style="left:490.5px;top:243px"></div>
<div class="hd" style="left:550.2px;top:243px"></div>
<!-- layout options button -->
<div class="a" style="left:556px;top:162.9px;width:14.4px;height:13.8px;background:#c5c8cc;border:1px solid #b3b6ba"></div>
<svg class="a" style="left:558.9px;top:166px" width="8.6" height="8.7" viewBox="0 0 8.6 8.7"><rect width="8.6" height="8.7" fill="#b3b9c0"/><rect y="1" width="8.6" height="0.7" fill="#d3d8dd"/><path d="M1.6 6 A2.7 2.7 0 0 1 7 6" fill="none" stroke="#e9ecef" stroke-width="2.2"/><path d="M1.9 6 A2.4 2.4 0 0 1 6.7 6" fill="none" stroke="#3f3f3f" stroke-width="1.1"/><rect y="7.2" width="8.6" height="0.7" fill="#d3d8dd"/></svg>
<!-- arrow -->
<svg class="a" style="left:505px;top:172px" width="62" height="126" viewBox="505 172 62 126"><path d="M561.4 178 L546.4 192 L552.9 192.8 L511.8 293.6 L512.7 293.6 L556.4 195.3 L561 197.6 Z" fill="#de4a47"/></svg>
<!-- popup -->
<div class="a" style="left:575.8px;top:162.2px;width:81.2px;height:175.4px;background:#fff;border:1.2px solid #6f6f6f;border-radius:0 0 1px 1px"></div>
<svg class="a" style="left:571px;top:162.2px" width="7" height="14" viewBox="0 0 7 14"><path d="M5.4 0.6 C5.4 3.5 1.6 6 1.6 7.6 C1.6 9 5.4 10.5 5.4 13.5" fill="#fff" stroke="#6f6f6f" stroke-width="1.2"/><rect x="5.6" y="1.2" width="1.4" height="12.8" fill="#fff"/></svg>
<div class="t" style="left:582px;top:169.4px;font-size:7.6px;color:#2f5597;-webkit-text-stroke:0.3px #2f5597">Layout Options</div>
<svg class="a" style="left:643.5px;top:169.7px" width="6" height="6" viewBox="0 0 6 6"><path d="M0.4 0.4 L5.6 5.6 M5.6 0.4 L0.4 5.6" stroke="#444" stroke-width="0.9"/></svg>
<div class="a" style="left:580.8px;top:188.3px;width:68.8px;height:10.4px;background:#ebebeb"></div>
<div class="t" style="left:584.8px;top:190.4px;font-size:6.2px;font-weight:bold;color:#444">In Line with Text</div>
<div class="a" style="left:582.7px;top:223.2px;width:66.3px;height:11.2px;background:#ebebeb"></div>
<div class="t" style="left:584.6px;top:225.6px;font-size:6.4px;font-weight:bold;color:#444">With Text Wrapping</div>
<div class="a" style="left:581.3px;top:235px;width:23px;height:22.6px;background:#c9c9c9;border:1px solid #b5b5b5"></div>
<svg class="a" style="left:584.6px;top:203.8px" width="15.3" height="15.3" viewBox="0 0 15.3 15.3"><rect width="15.3" height="3.2" fill="#c9d5e2"/><rect y="10.2" width="15.3" height="5.1" fill="#c9d5e2"/><rect y="12.4" width="15.3" height="0.8" fill="#e3eaf2"/><path d="M3.2 9.6 A4.3 4.3 0 0 1 11.9 9.6" fill="none" stroke="#3d3d3d" stroke-width="1.6"/></svg>
<svg class="a" style="left:585.3px;top:238.9px" width="15.3" height="15.3" viewBox="0 0 15.3 15.3"><rect width="15.3" height="15.3" fill="#b8c2cc"/><rect y="12.4" width="15.3" height="0.8" fill="#e3eaf2"/><path d="M2.8 9.4 A4.6 4.6 0 0 1 12.2 9.4" fill="none" stroke="#f4f7fa" stroke-width="3" opacity="0.85"/><rect x="1.5" y="9.4" width="12.3" height="1" fill="#f4f7fa" opacity="0.85"/><path d="M3.2 9.6 A4.3 4.3 0 0 1 11.9 9.6" fill="none" stroke="#333" stroke-width="1.6"/></svg>
<svg class="a" style="left:608.2px;top:238.9px" width="15.3" height="15.3" viewBox="0 0 15.3 15.3"><rect width="15.3" height="15.3" fill="#c9d5e2"/><rect y="12.4" width="15.3" height="0.8" fill="#e3eaf2"/><path d="M2.8 9.4 A4.6 4.6 0 0 1 12.2 9.4" fill="none" stroke="#f4f7fa" stroke-width="3" opacity="0.85"/><rect x="1.5" y="9.4" width="12.3" height="1" fill="#f4f7fa" opacity="0.85"/><path d="M3.2 9.6 A4.3 4.3 0 0 1 11.9 9.6" fill="none" stroke="#3d3d3d" stroke-width="1.6"/></svg>
<svg class="a" style="left:631.0px;top:238.9px" width="15.3" height="15.3" viewBox="0 0 15.3 15.3"><rect width="15.3" height="15.3" fill="#c9d5e2"/><rect y="12.4" width="15.3" height="0.8" fill="#e3eaf2"/><path d="M2.8 9.4 A4.6 4.6 0 0 1 12.2 9.4" fill="none" stroke="#f4f7fa" stroke-width="3" opacity="0.85"/><rect x="1.5" y="9.4" width="12.3" height="1" fill="#f4f7fa" opacity="0.85"/><path d="M3.2 9.6 A4.3 4.3 0 0 1 11.9 9.6" fill="none" stroke="#3d3d3d" stroke-width="1.6"/></svg>
<svg class="a" style="left:585.3px;top:261.6px" width="15.3" height="15.3" viewBox="0 0 15.3 15.3"><rect y="10.2" width="15.3" height="5.1" fill="#c9d5e2"/><rect y="12.4" width="15.3" height="0.8" fill="#e3eaf2"/><path d="M3.2 9.6 A4.3 4.3 0 0 1 11.9 9.6" fill="none" stroke="#3d3d3d" stroke-width="1.6"/></svg>
<svg class="a" style="left:608.2px;top:261.6px" width="15.3" height="15.3" viewBox="0 0 15.3 15.3"><rect width="15.3" height="15.3" fill="#c9d5e2"/><rect y="12.4" width="15.3" height="0.8" fill="#e3eaf2"/><path d="M2.8 9.4 A4.6 4.6 0 0 1 12.2 9.4" fill="none" stroke="#f4f7fa" stroke-width="3" opacity="0.85"/><rect x="1.5" y="9.4" width="12.3" height="1" fill="#f4f7fa" opacity="0.85"/><path d="M3.2 9.6 A4.3 4.3 0 0 1 11.9 9.6" fill="none" stroke="#6e7b88" stroke-width="1.6"/></svg>
<svg class="a" style="left:631.0px;top:261.6px" width="15.3" height="15.3" viewBox="0 0 15.3 15.3"><rect width="15.3" height="15.3" fill="#c9d5e2"/><rect y="12.4" width="15.3" height="0.8" fill="#e3eaf2"/><path d="M2.8 9.4 A4.6 4.6 0 0 1 12.2 9.4" fill="none" stroke="#f4f7fa" stroke-width="3" opacity="0.85"/><rect x="1.5" y="9.4" width="12.3" height="1" fill="#f4f7fa" opacity="0.85"/><path d="M3.2 9.6 A4.3 4.3 0 0 1 11.9 9.6" fill="none" stroke="#3d3d3d" stroke-width="1.6"/></svg>

<div class="a" style="left:584.3px;top:285.9px;width:6px;height:6px;border-radius:50%;border:1.6px solid #2f3b4c;background:#fff"></div>
<div class="t" style="left:593.5px;top:285.7px;font-size:6.3px;color:#444">Move with text</div>
<div class="a" style="left:593.5px;top:292.3px;width:5px;height:0.6px;background:#444"></div>
<div class="a" style="left:636.7px;top:285px;width:6px;height:6px;border-radius:50%;border:0.8px solid #5b9bd5;background:#eef4fa"></div>
<div class="a" style="left:639.4px;top:286.6px;width:0.7px;height:2.8px;background:#2f6eb5"></div>
<div class="a" style="left:584.3px;top:298px;width:6px;height:6px;border-radius:50%;border:0.8px solid #aaa;background:#fff"></div>
<div class="t" style="left:593.5px;top:298.6px;font-size:6.3px;color:#444">Fix position on</div>
<div class="t" style="left:593.5px;top:307.6px;font-size:6.3px;color:#444">page</div>
<div class="a" style="left:644.8px;top:297px;width:6px;height:6px;border-radius:50%;border:0.8px solid #5b9bd5;background:#eef4fa"></div>
<div class="a" style="left:647.5px;top:298.6px;width:0.7px;height:2.8px;background:#2f6eb5"></div>
<div class="t" style="left:619.6px;top:323.5px;font-size:5.8px;color:#2f5597;text-decoration:underline">See more...</div>

</body></html>
